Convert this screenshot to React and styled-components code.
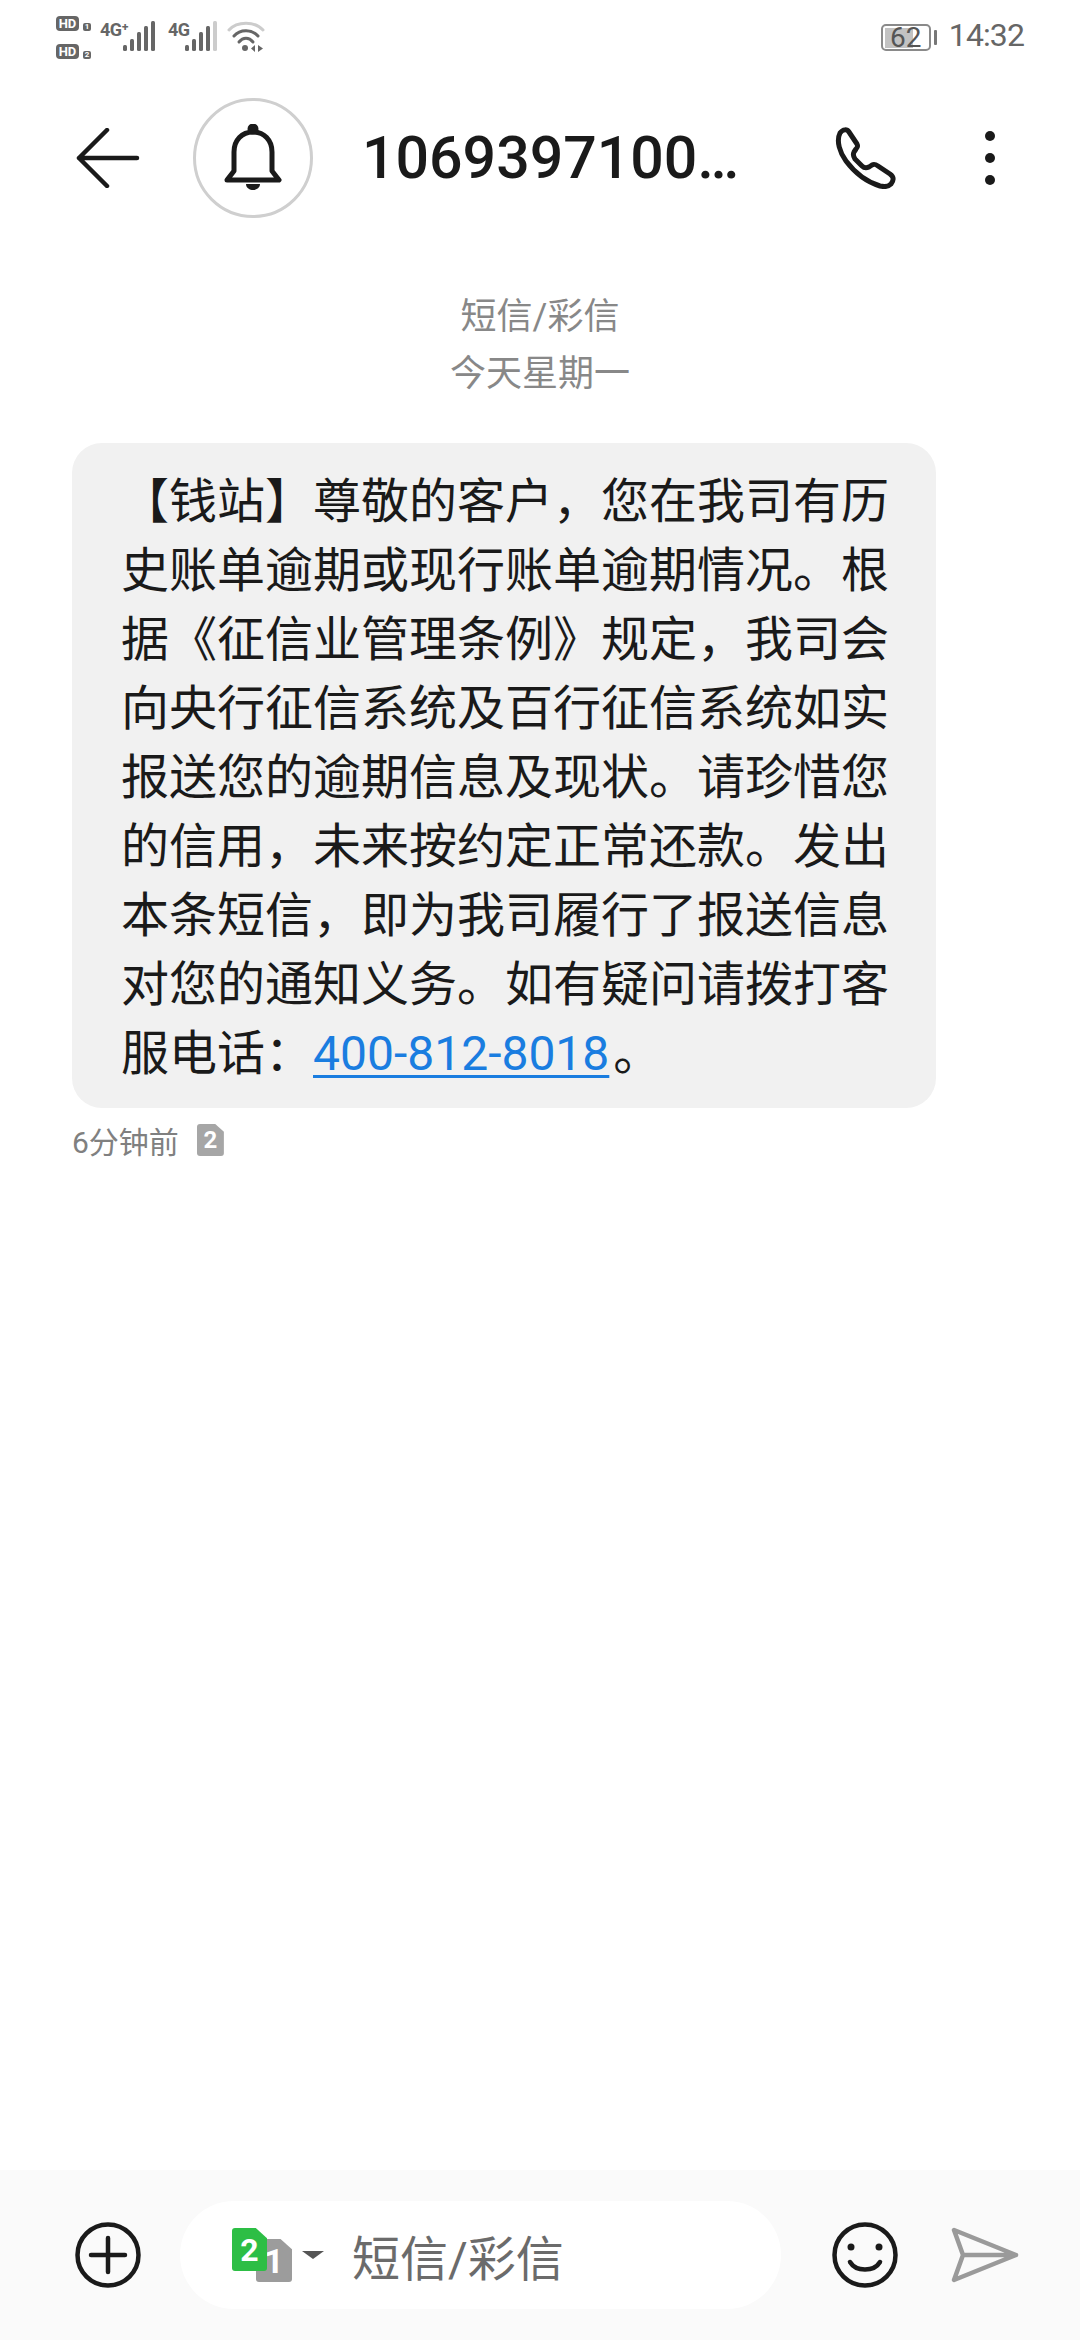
import React from 'react';
import styled, { createGlobalStyle } from 'styled-components';

const GlobalStyle = createGlobalStyle`
  html, body {
    margin: 0;
    padding: 0;
    background: #fff;
    font-family: Roboto, "Noto Sans CJK SC", sans-serif;
  }
`;

const Page = styled.div`
  width: 1080px;
  height: 2340px;
  display: flex;
  flex-direction: column;
  overflow: hidden;
  background: #fff;
`;

const StatusBar = styled.div`
  height: 75px;
  box-sizing: border-box;
  display: flex;
  align-items: flex-start;
  padding: 16px 56px 0 56px;
`;

const SimColumn = styled.div`
  display: flex;
  flex-direction: column;
  gap: 13px;
`;

const SimRow = styled.div`
  display: flex;
  align-items: flex-end;
  gap: 4px;
`;

const HdBadge = styled.span`
  width: 23px;
  height: 15px;
  border-radius: 4px;
  background: #666;
  color: #fff;
  font-size: 13px;
  line-height: 15px;
  font-weight: 700;
  text-align: center;
`;

const SimNumber = styled.span`
  width: 8px;
  height: 8px;
  border-radius: 2px;
  background: #666;
  color: #fff;
  font-size: 8px;
  line-height: 8px;
  font-weight: 700;
  text-align: center;
`;

const Network = styled.div`
  display: flex;
  align-items: flex-start;
  margin-left: ${p => p.$gap}px;
  padding-top: 5px;
`;

const NetLabel = styled.span`
  font-family: "Roboto", sans-serif;
  font-size: 18px;
  line-height: 18px;
  font-weight: 700;
  color: #666;
  width: ${p => p.$width}px;
  letter-spacing: -0.5px;
  white-space: nowrap;
`;

const Spacer = styled.div`
  flex: 1;
`;

const Battery = styled.div`
  position: relative;
  width: 50px;
  height: 27px;
  box-sizing: border-box;
  margin-top: 8px;
  border: 2px solid #8a8a8a;
  border-radius: 5px;
  color: #555;
  font-size: 28px;
  line-height: 23px;
  text-align: center;
`;

const BatteryFill = styled.div`
  position: absolute;
  left: 2px;
  top: 2px;
  bottom: 1px;
  background: #c2c2c2;
`;

const BatteryValue = styled.span`
  position: relative;
`;

const BatteryNub = styled.div`
  width: 3px;
  height: 15px;
  margin: 14px 12px 0 3px;
  border-radius: 1px;
  background: #777;
`;

const Time = styled.span`
  font-size: 32px;
  line-height: 38px;
  color: #666;
  letter-spacing: -0.9px;
`;

const Header = styled.header`
  height: 118px;
  margin-top: 24px;
  display: flex;
  align-items: center;
  padding-left: 74px;
`;

const BellCircle = styled.div`
  width: 120px;
  height: 120px;
  box-sizing: border-box;
  margin-left: 53px;
  border: 3px solid #cfcfcf;
  border-radius: 50%;
  display: flex;
  align-items: center;
  justify-content: center;
`;

const Title = styled.h1`
  width: 473px;
  margin: 0 0 0 49px;
  font-size: 59px;
  line-height: 70px;
  font-weight: 500;
  color: #1a1a1a;
  white-space: nowrap;
`;

const DotsWrap = styled.div`
  display: flex;
  margin-left: 87px;
`;

const DateBlock = styled.div`
  margin-top: 72px;
  text-align: center;
  color: #888;
  font-size: 36px;
  line-height: 57px;
`;

const Bubble = styled.div`
  width: 864px;
  box-sizing: border-box;
  margin: 40px 0 0 72px;
  padding: 24px 0 20px 49px;
  border-radius: 30px;
  background: #f1f1f1;
  color: #1a1a1a;
  font-size: 48px;
  line-height: 69px;
  white-space: nowrap;
`;

const PhoneLink = styled.a`
  margin-right: 4px;
  color: #1a7de0;
  text-decoration: underline;
  text-decoration-thickness: 3px;
  text-underline-offset: 5px;
`;

const Meta = styled.div`
  margin: 16px 0 0 72px;
  display: flex;
  align-items: center;
  gap: 18px;
  height: 32px;
  color: #808080;
  font-size: 30px;
`;

const SimCard = styled.div`
  position: ${p => (p.$over ? 'absolute' : 'relative')};
  left: ${p => (p.$over ? `${p.$left}px` : 'auto')};
  top: ${p => (p.$over ? `${p.$top}px` : 'auto')};
  width: ${p => p.$w}px;
  height: ${p => p.$h}px;
  display: flex;
  align-items: center;
  justify-content: center;
  border-radius: 3px;
  clip-path: polygon(0 0, 68% 0, 100% 24%, 100% 100%, 0 100%);
  background: ${p => p.$color};
  color: #fff;
  font-size: ${p => p.$font}px;
  font-weight: 700;
`;

const Footer = styled.footer`
  margin-top: auto;
  height: 170px;
  box-sizing: border-box;
  display: flex;
  align-items: center;
  padding-left: 75px;
  background: #fafafa;
`;

const InputPill = styled.div`
  width: 601px;
  height: 108px;
  margin: 0 51px 0 39px;
  display: flex;
  align-items: center;
  border-radius: 54px;
  background: #fff;
`;

const SimSwitch = styled.div`
  position: relative;
  width: 60px;
  height: 54px;
  margin-left: 52px;
`;

const Caret = styled.div`
  width: 0;
  height: 0;
  margin: 0 28px 0 10px;
  border-left: 11px solid transparent;
  border-right: 11px solid transparent;
  border-top: 8px solid #555;
`;

const Placeholder = styled.span`
  font-size: 48px;
  color: #6b6b6b;
`;

const SendWrap = styled.div`
  display: flex;
  margin-left: 53px;
`;

const BackIcon = () => (
  <svg width="66" height="60" viewBox="0 0 66 60" fill="none" stroke="#1a1a1a" strokeWidth="4.5" strokeLinecap="round" strokeLinejoin="round">
    <path d="M33 2 L5 30 L33 58 M5 30 H63" />
  </svg>
);

const BellIcon = () => (
  <svg width="60" height="68" viewBox="0 0 60 68" fill="none">
    <circle cx="30" cy="5" r="5.5" fill="#1a1a1a" />
    <path d="M11 47 V28 C11 16 19 8 30 8 C41 8 49 16 49 28 V47 L56 56 H4 Z" stroke="#1a1a1a" strokeWidth="5" strokeLinejoin="round" />
    <path d="M23 60 H37 C37 64 33 66 30 66 C27 66 23 64 23 60 Z" fill="#1a1a1a" />
  </svg>
);

const PhoneIcon = () => (
  <svg width="62" height="62" viewBox="0 0 62 62" fill="none" stroke="#1a1a1a" strokeWidth="5" strokeLinejoin="round">
    <path d="M5 6 C8 2 12 2 14 5 L22 17 C23 19 23 20 21 22 L19 25 C18 27 18 29 20 32 L27 39 C29 41 32 41 34 40 L37 38 C39 37 40 37 43 39 L55 47 C59 50 59 53 56 57 C53 60 49 60 45 59 C32 55 20 46 11 34 C5 26 1 14 5 6 Z" />
  </svg>
);

const DotsIcon = () => (
  <svg width="12" height="56" viewBox="0 0 12 56" fill="#1a1a1a">
    <circle cx="6" cy="6" r="5" />
    <circle cx="6" cy="28" r="5" />
    <circle cx="6" cy="50" r="5" />
  </svg>
);

const BAR_TOPS = [24, 18, 11, 5, 0];

const SignalBars = ({ faded }) => (
  <svg width="33" height="30" viewBox="0 0 33 30">
    {BAR_TOPS.map((top, i) => (
      <rect
        key={i}
        x={i * 7}
        y={top}
        width="4"
        height={30 - top}
        rx="1.5"
        fill={faded && i === 4 ? '#cccccc' : '#666666'}
      />
    ))}
  </svg>
);

const WifiIcon = () => (
  <svg width="38" height="32" viewBox="0 0 38 32" fill="none">
    <path d="M2 9 C10 0 28 0 36 9" stroke="#cccccc" strokeWidth="3" strokeLinecap="round" />
    <path d="M7 15 C13 8 25 8 31 15" stroke="#666" strokeWidth="3" strokeLinecap="round" />
    <path d="M12 21 C16 16 22 16 26 21" stroke="#666" strokeWidth="3" strokeLinecap="round" />
    <circle cx="18" cy="27" r="3" fill="#666" />
    <path d="M28 24 V31 L24 27.5 Z M31 24 V31 L36 27.5 Z" fill="#666" />
  </svg>
);

const PlusIcon = () => (
  <svg width="66" height="66" viewBox="0 0 66 66" fill="none" stroke="#1a1a1a" strokeLinecap="round">
    <circle cx="33" cy="33" r="30.5" strokeWidth="4.5" />
    <path d="M16 33 H50 M33 16 V50" strokeWidth="4.5" />
  </svg>
);

const SmileIcon = () => (
  <svg width="66" height="66" viewBox="0 0 66 66" fill="none" stroke="#1a1a1a" strokeLinecap="round">
    <circle cx="33" cy="33" r="30.5" strokeWidth="4.5" />
    <circle cx="19" cy="25" r="3.5" fill="#1a1a1a" stroke="none" />
    <circle cx="47" cy="25" r="3.5" fill="#1a1a1a" stroke="none" />
    <path d="M18 40 C24 50 42 50 48 40" strokeWidth="4.5" />
  </svg>
);

const SendIcon = () => (
  <svg width="68" height="56" viewBox="0 0 68 56" fill="none" stroke="#9a9a9a" strokeWidth="4.5" strokeLinecap="round" strokeLinejoin="round">
    <path d="M3 3 L65 28 L3 53 L12 28 Z M12 28 H65" />
  </svg>
);

export default function App() {
  return (
    <Page>
      <GlobalStyle />
      <StatusBar>
        <SimColumn>
          <SimRow>
            <HdBadge>HD</HdBadge>
            <SimNumber>1</SimNumber>
          </SimRow>
          <SimRow>
            <HdBadge>HD</HdBadge>
            <SimNumber>2</SimNumber>
          </SimRow>
        </SimColumn>
        <Network $gap={9}>
          <NetLabel $width={23}>4G⁺</NetLabel>
          <SignalBars />
        </Network>
        <Network $gap={12}>
          <NetLabel $width={17}>4G</NetLabel>
          <SignalBars faded />
        </Network>
        <Network $gap={9}>
          <WifiIcon />
        </Network>
        <Spacer />
        <Battery>
          <BatteryFill style={{ width: '62%' }} />
          <BatteryValue>62</BatteryValue>
        </Battery>
        <BatteryNub />
        <Time>14:32</Time>
      </StatusBar>

      <Header>
        <BackIcon />
        <BellCircle>
          <BellIcon />
        </BellCircle>
        <Title>1069397100…</Title>
        <PhoneIcon />
        <DotsWrap>
          <DotsIcon />
        </DotsWrap>
      </Header>

      <DateBlock>
        短信/彩信
        <br />
        今天星期一
      </DateBlock>

      <Bubble>
        【钱站】尊敬的客户，您在我司有历
        <br />
        史账单逾期或现行账单逾期情况。根
        <br />
        据《征信业管理条例》规定，我司会
        <br />
        向央行征信系统及百行征信系统如实
        <br />
        报送您的逾期信息及现状。请珍惜您
        <br />
        的信用，未来按约定正常还款。发出
        <br />
        本条短信，即为我司履行了报送信息
        <br />
        对您的通知义务。如有疑问请拨打客
        <br />
        服电话：<PhoneLink>400-812-8018</PhoneLink>。
      </Bubble>

      <Meta>
        <span>6分钟前</span>
        <SimCard $w={27} $h={32} $color="#a6a6a6" $font={24}>2</SimCard>
      </Meta>

      <Footer>
        <PlusIcon />
        <InputPill>
          <SimSwitch>
            <SimCard $over $left={24} $top={11} $w={36} $h={43} $color="#9c9c9c" $font={34}>1</SimCard>
            <SimCard $over $left={0} $top={0} $w={35} $h={43} $color="#2dbe45" $font={32}>2</SimCard>
          </SimSwitch>
          <Caret />
          <Placeholder>短信/彩信</Placeholder>
        </InputPill>
        <SmileIcon />
        <SendWrap>
          <SendIcon />
        </SendWrap>
      </Footer>
    </Page>
  );
}
